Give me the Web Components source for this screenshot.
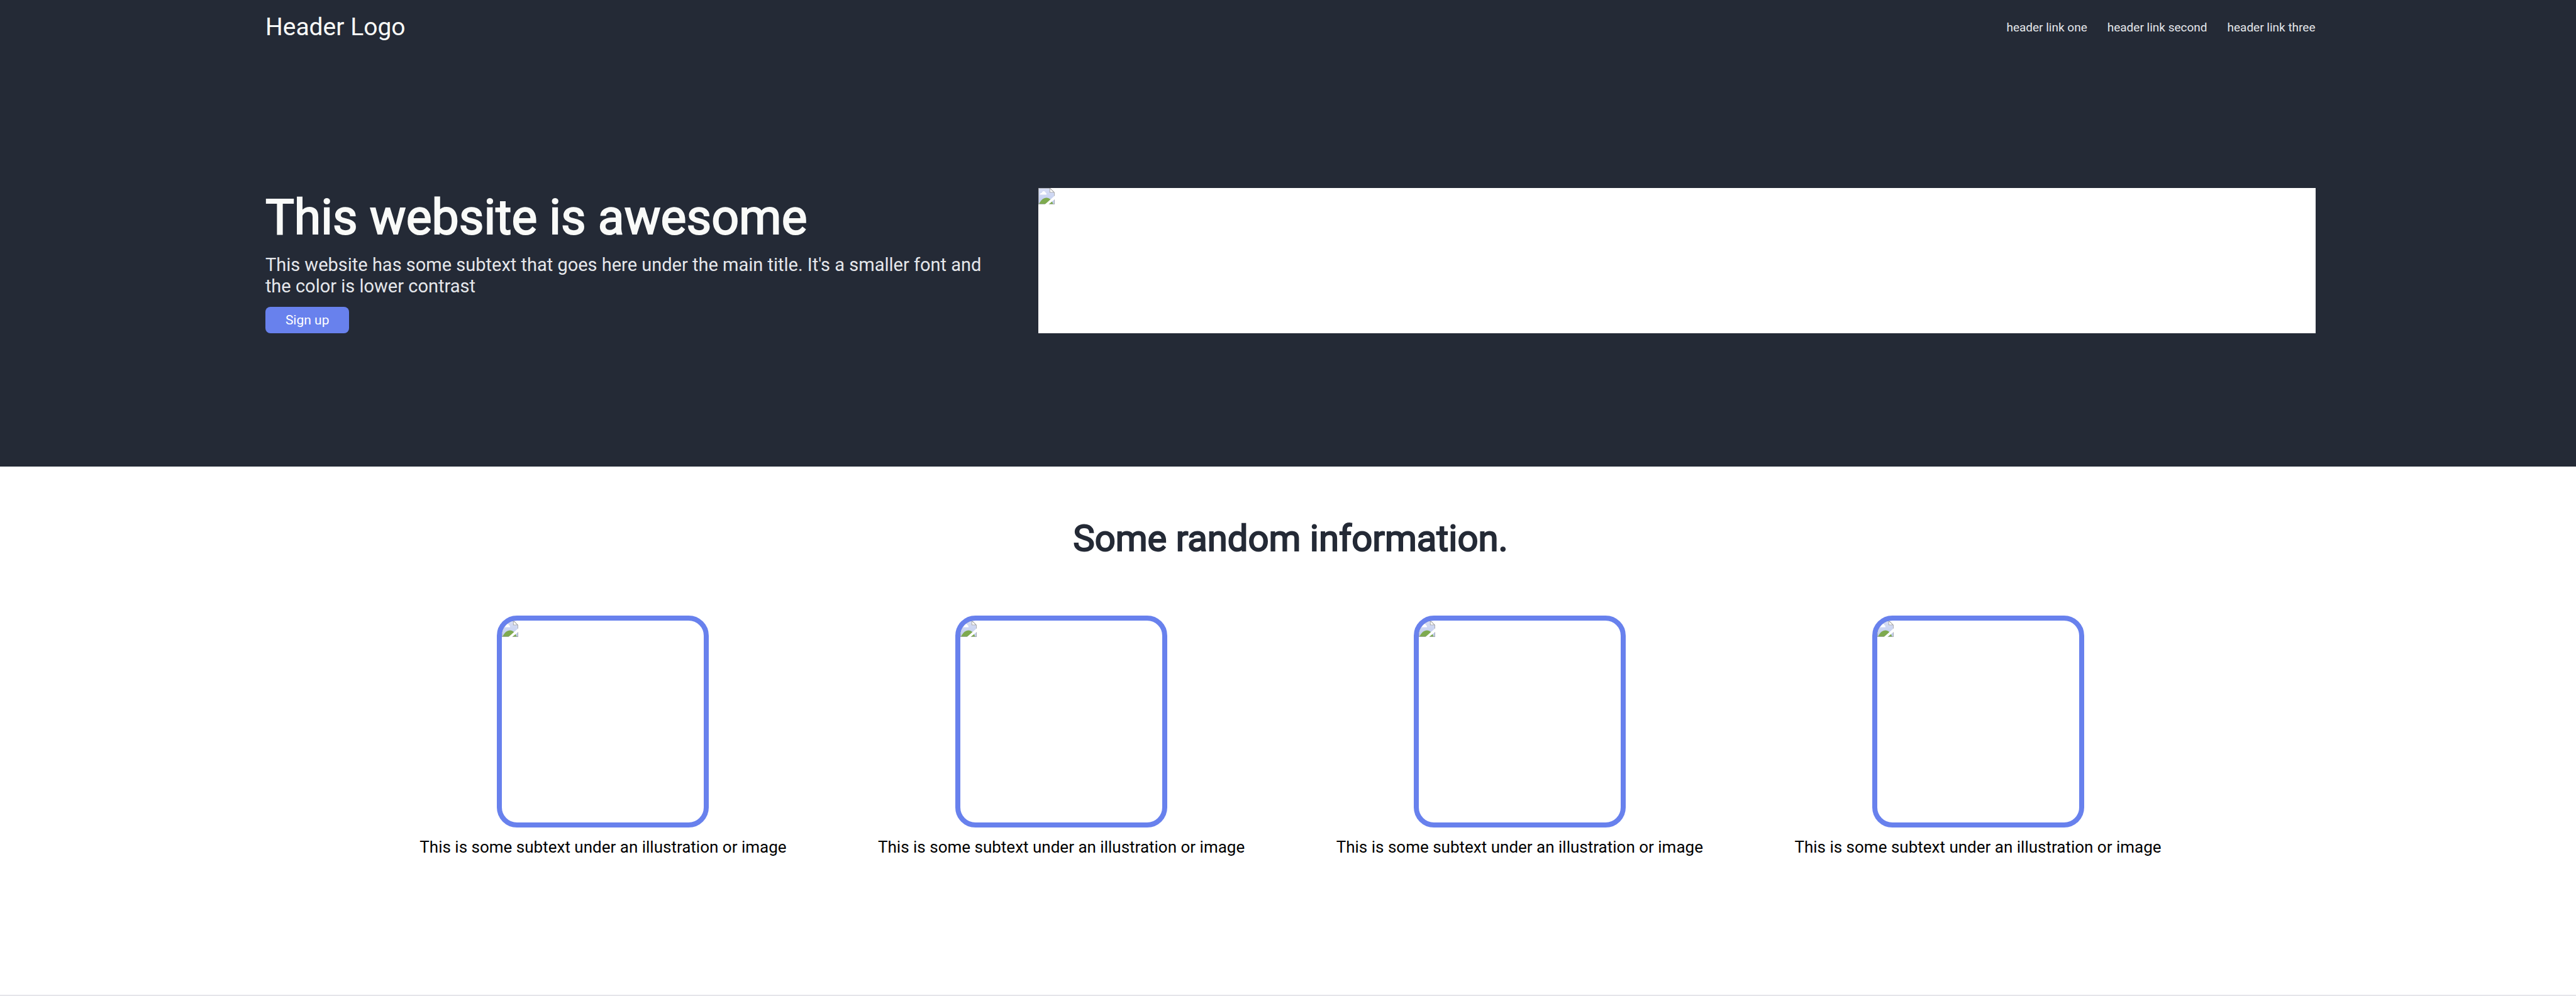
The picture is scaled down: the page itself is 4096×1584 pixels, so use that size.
<!DOCTYPE html>
<html lang="en">
<head>
<meta charset="utf-8">
<meta name="viewport" content="width=device-width, initial-scale=1">
<title>Landing page</title>
<style>
  :root {
    --dark: #242a36;
    --accent: #6881ed;
    --light: #f9faf8;
    --muted: #e5e7eb;
    --gutter-left: 10.3%;
    --gutter-right: 10.12%;
  }
  body {
    margin: 0;
    background: #fff;
    color: #000;
    font-family: Roboto, sans-serif;
  }
</style>
</head>
<body>
<site-header>
  <span slot="logo">Header Logo</span>
  <nav-link href="#one">header link one</nav-link>
  <nav-link href="#second">header link second</nav-link>
  <nav-link href="#three">header link three</nav-link>
</site-header>
<main>
  <hero-banner>
    <span slot="title">This website is awesome</span>
    <span slot="text">This website has some subtext that goes here under the main title. It's a smaller font and the color is lower contrast</span>
    <span slot="action">Sign up</span>
  </hero-banner>
  <info-section>
    <span slot="title">Some random information.</span>
    <info-card>This is some subtext under an illustration or image</info-card>
    <info-card>This is some subtext under an illustration or image</info-card>
    <info-card>This is some subtext under an illustration or image</info-card>
    <info-card>This is some subtext under an illustration or image</info-card>
  </info-section>
</main>

<script>
const define = (name, html) => {
  const template = document.createElement('template');
  template.innerHTML = html;
  customElements.define(name, class extends HTMLElement {
    constructor() {
      super();
      this.attachShadow({ mode: 'open' }).append(template.content.cloneNode(true));
    }
    connectedCallback() {
      const link = this.shadowRoot.querySelector('a');
      if (link) link.href = this.getAttribute('href') || '#';
    }
  });
};

define('image-placeholder', `
  <style>
    :host { display: block; background: #fff; }
    svg { display: block; width: 26px; height: 26px; }
  </style>
  <svg viewBox="0 0 32 32" aria-hidden="true">
    <defs>
      <linearGradient id="sky" x1="0" y1="0" x2="0" y2="1">
        <stop offset="0" stop-color="#d8def5"/>
        <stop offset="1" stop-color="#c0cdee"/>
      </linearGradient>
    </defs>
    <path d="M0 0H23L32 9V32H0Z" fill="#a3a3a3"/>
    <path d="M1 1H22L31 9V31H1Z" fill="url(#sky)"/>
    <path d="M3 13C3 10.500 5 9.500 7 9.500C7.500 7 9 6 10.500 6C12.500 6 13.500 7.500 14 9C15.500 9.500 16 11 16 13Z" fill="#fff"/>
    <path d="M1.500 31C5 23.500 10 19 16 19C22 19 26 24 29 31Z" fill="#7eaa4f"/>
    <path d="M22 0H23L32 9H22Z" fill="#999"/>
    <path d="M23 1.500L29.800 8H23Z" fill="#fff"/>
    <path d="M13 32L32 15V22L20 32Z" fill="#fff"/>
  </svg>`);

define('nav-link', `
  <style>
    :host { display: block; }
    a { display: block; color: var(--muted); font-size: 19px; line-height: 22px; text-decoration: none; }
  </style>
  <a><slot></slot></a>`);

define('site-header', `
  <style>
    :host { display: block; background: var(--dark); }
    header {
      display: flex; align-items: center; justify-content: space-between;
      padding: 21px var(--gutter-right) 21px var(--gutter-left);
    }
    .logo { color: var(--light); font-size: 39px; line-height: 45px; }
    nav { display: flex; gap: 32px; }
  </style>
  <header>
    <div class="logo"><slot name="logo"></slot></div>
    <nav><slot></slot></nav>
  </header>`);

define('hero-banner', `
  <style>
    :host { display: block; background: var(--dark); }
    section {
      display: grid; grid-template-columns: 1149fr 2031fr; column-gap: 80px;
      padding: 212px var(--gutter-right) 212px var(--gutter-left);
    }
    .copy { display: flex; flex-direction: column; align-items: flex-start; }
    h1 {
      margin: 0 0 11px; color: var(--light);
      font-size: 77px; font-weight: 400; line-height: 94px;
      -webkit-text-stroke: 2px currentColor;
    }
    p { margin: 0 0 16px; color: var(--muted); font-size: 29px; line-height: 34px; }
    button {
      padding: 8px 32px; border: 0; border-radius: 8px;
      background: var(--accent); color: #fff;
      font-family: inherit; font-size: 21px; line-height: 26px;
    }
  </style>
  <section>
    <div class="copy">
      <h1><slot name="title"></slot></h1>
      <p><slot name="text"></slot></p>
      <button type="button"><slot name="action"></slot></button>
    </div>
    <image-placeholder></image-placeholder>
  </section>`);

define('info-card', `
  <style>
    :host { display: flex; flex-direction: column; align-items: center; gap: 16px; }
    image-placeholder {
      width: 321px; height: 321px; overflow: hidden;
      border: 8px solid var(--accent); border-radius: 32px;
    }
    p { margin: 0; font-size: 26px; line-height: 30px; text-align: center; }
  </style>
  <image-placeholder></image-placeholder>
  <p><slot></slot></p>`);

define('info-section', `
  <style>
    :host { display: block; border-bottom: 2px solid #e5e5ea; }
    section {
      display: flex; flex-direction: column; align-items: center; gap: 89px;
      padding: 80px 0 220px 8px;
    }
    h2 {
      margin: 0; color: var(--dark);
      font-size: 58px; font-weight: 400; line-height: 68px;
      -webkit-text-stroke: 2px currentColor;
    }
    .cards { display: grid; grid-template-columns: repeat(4, 1fr); width: 71.3%; }
  </style>
  <section>
    <h2><slot name="title"></slot></h2>
    <div class="cards"><slot></slot></div>
  </section>`);
</script>
</body>
</html>
